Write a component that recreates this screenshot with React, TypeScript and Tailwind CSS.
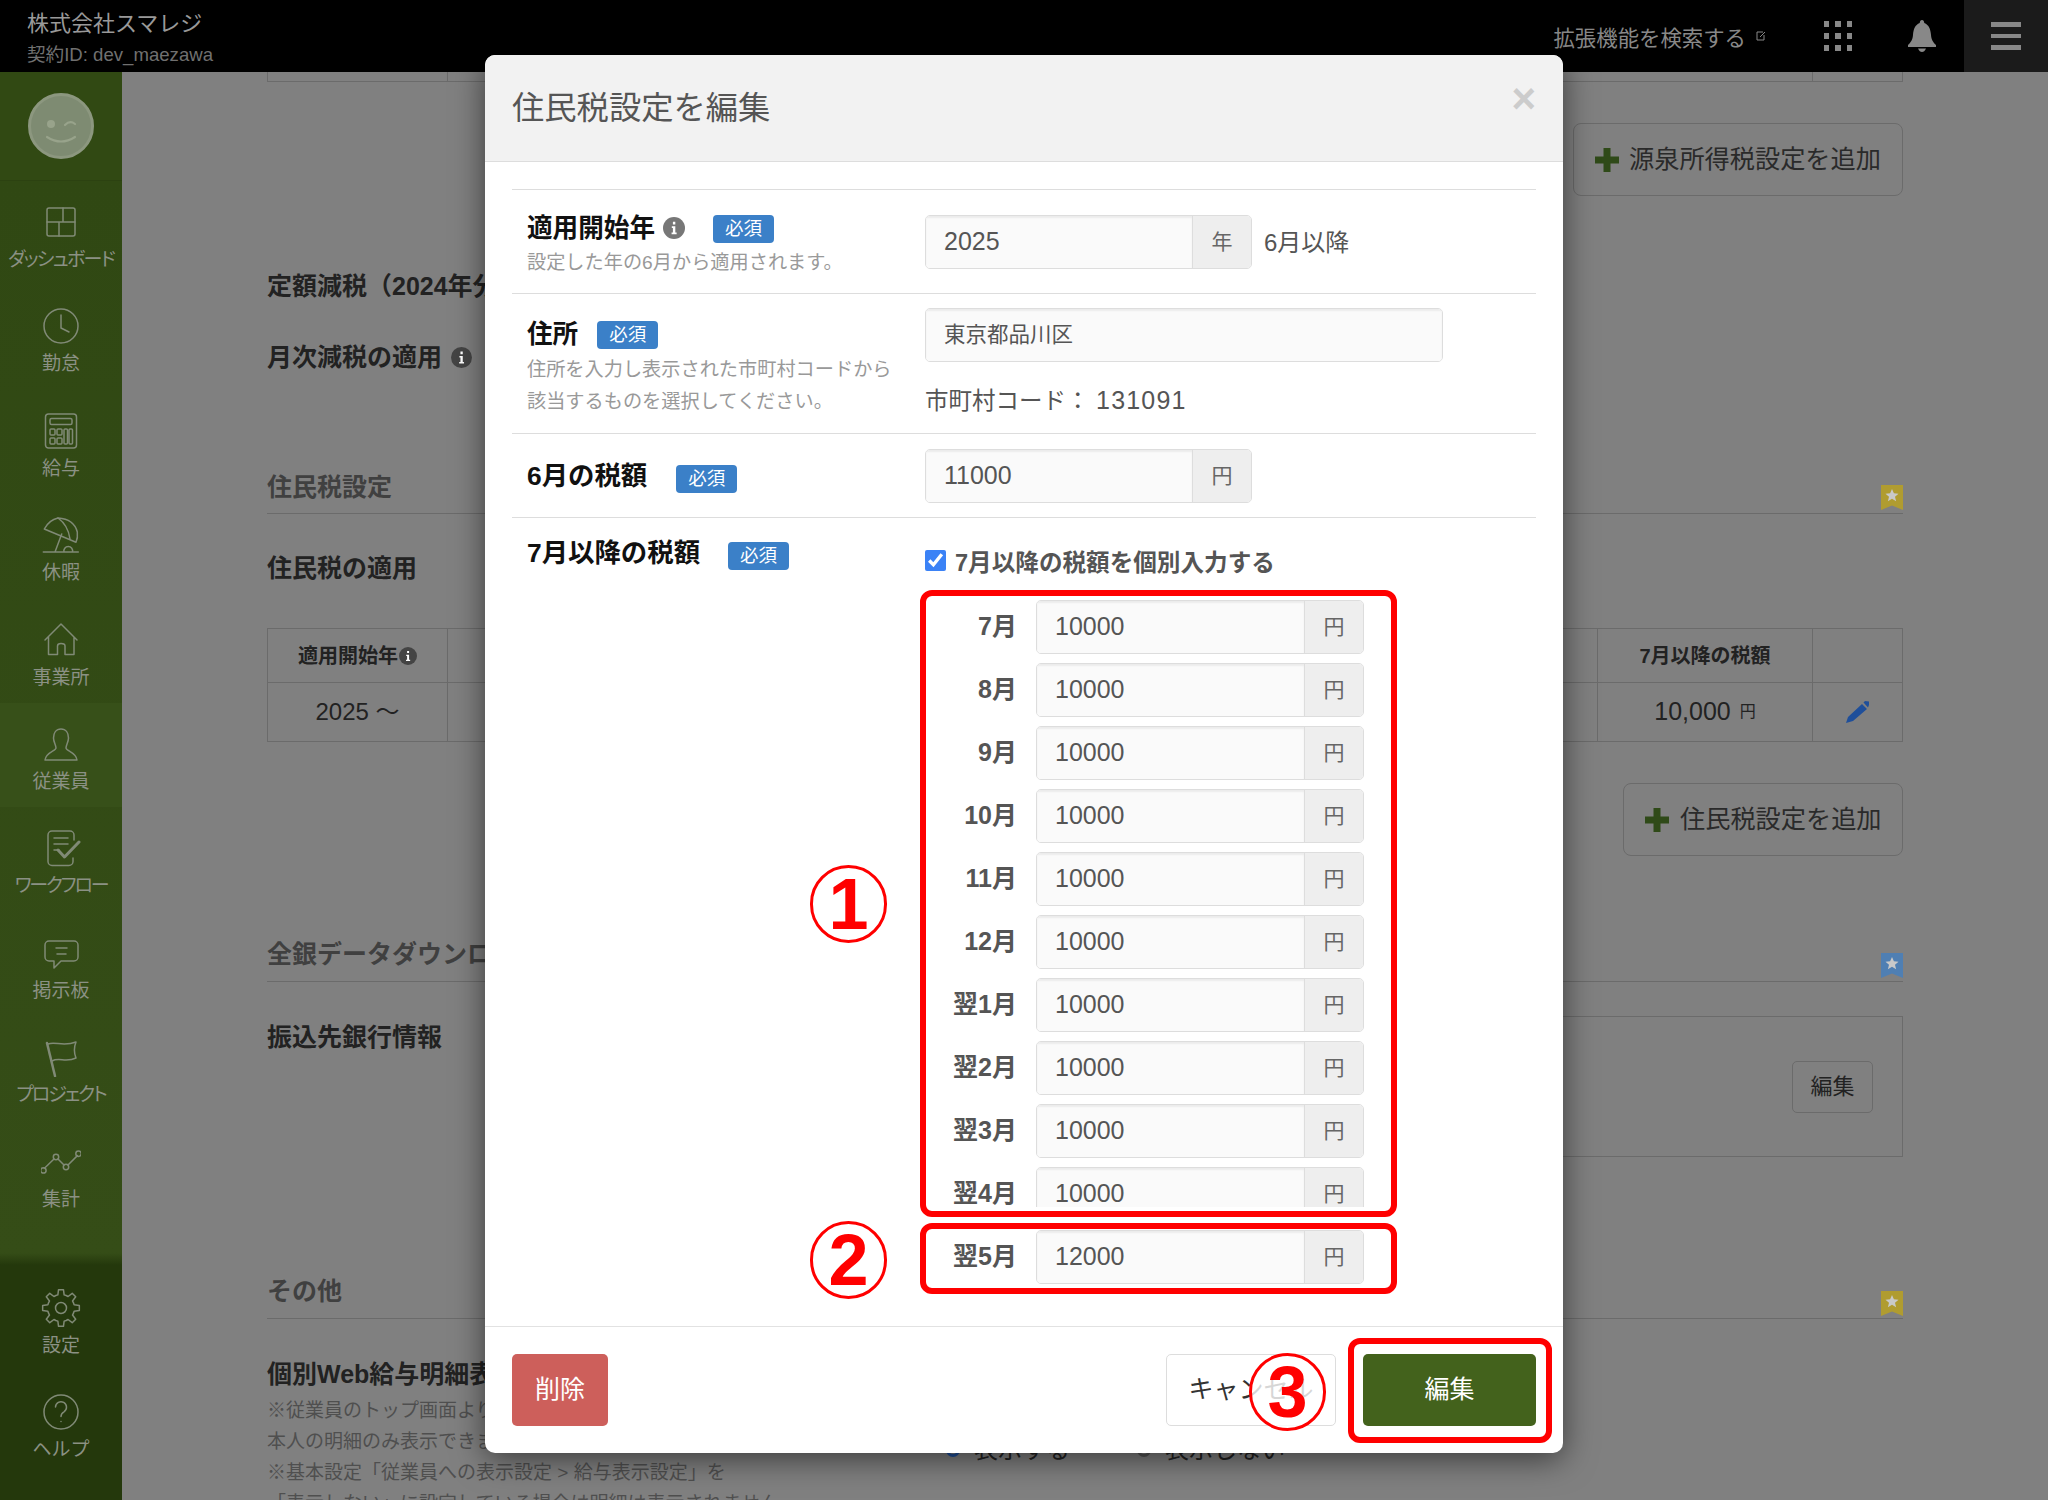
import React from "react";

const gearPath = (() => {
  const teeth = 8, cx = 20, cy = 20, ro = 18.5, ri = 13.5;
  let d = "";
  for (let i = 0; i < teeth; i++) {
    const a = (i / teeth) * Math.PI * 2 - Math.PI / 2;
    const s = (Math.PI * 2) / teeth;
    const pts: [number, number][] = [
      [ri, a - s * 0.5],
      [ri, a - s * 0.3],
      [ro, a - s * 0.17],
      [ro, a + s * 0.17],
      [ri, a + s * 0.3],
    ];
    pts.forEach(([r, t], j) => {
      const x = (cx + r * Math.cos(t)).toFixed(2);
      const y = (cy + r * Math.sin(t)).toFixed(2);
      d += `${i === 0 && j === 0 ? "M" : "L"}${x} ${y} `;
    });
  }
  return d + "Z";
})();

const Svg = ({ children }: { children: React.ReactNode }) => (
  <svg width="40" height="40" viewBox="0 0 40 40" fill="none" stroke="currentColor" strokeWidth="1.5" strokeLinecap="round" strokeLinejoin="round">
    {children}
  </svg>
);

const icons: Record<string, React.ReactNode> = {
  dash: (
    <Svg>
      <rect x="6" y="6" width="28" height="28" rx="2" />
      <path d="M6 20H34M22 6V20M18 20V34" />
    </Svg>
  ),
  clock: (
    <Svg>
      <circle cx="20" cy="20" r="17" />
      <path d="M20 9V22L28 26" />
    </Svg>
  ),
  calc: (
    <Svg>
      <rect x="4.5" y="3" width="31" height="34" rx="3" />
      <rect x="9" y="7.5" width="22" height="6" rx="1.5" />
      <rect x="9" y="18" width="5" height="6" rx="1" />
      <rect x="16" y="18" width="5" height="6" rx="1" />
      <rect x="9" y="27" width="5" height="6" rx="1" />
      <rect x="16" y="27" width="5" height="6" rx="1" />
      <rect x="23" y="18" width="3.5" height="15" rx="1" />
      <rect x="28" y="18" width="3.5" height="15" rx="1" />
    </Svg>
  ),
  beach: (
    <Svg>
      <path d="M3.3 14Q8 5 17 3Q33 4 36.3 17Q37 23 35 27.3Z" />
      <path d="M17 3Q27 10 29 24M20.7 19L14 37M2.3 37H37.3M23 37A4.4 4.4 0 1 1 31.5 37" />
    </Svg>
  ),
  home: (
    <Svg>
      <path d="M4 20L20 4L36 20M7.5 17V34.5H16.5V26Q16.5 23.5 20 23.5Q24 23.5 24 26V34.5H33V17" />
    </Svg>
  ),
  user: (
    <Svg>
      <path d="M20 5C15 5 12.5 9 12.5 14C12.5 18 15 21 15 24C15 27 5 28 4 36H36C35 28 25 27 25 24C25 21 27.5 18 27.5 14C27.5 9 25 5 20 5Z" />
    </Svg>
  ),
  flow: (
    <Svg>
      <path d="M33 12V7A4 4 0 0 0 29 3H11A4 4 0 0 0 7 7V33.5A4 4 0 0 0 11 37.5H28A4 4 0 0 0 32 33.5V30" />
      <path d="M13 10H27M13 16H27M13 22H18" />
      <path d="M17 22L23.5 29L38 14" strokeWidth="3" />
    </Svg>
  ),
  chat: (
    <Svg>
      <path d="M8 8H33A4 4 0 0 1 37 12V24A4 4 0 0 1 33 28H20L13 35V28H8A4 4 0 0 1 4 24V12A4 4 0 0 1 8 8Z" />
      <path d="M15 15H26M16 21H25" />
    </Svg>
  ),
  flag: (
    <Svg>
      <path d="M6 6L14 39" strokeWidth="2.5" />
      <path d="M7 7C14 4 22 10 35 5C33 10 33 16 35 21C25 26 18 20 11 24" />
    </Svg>
  ),
  chart: (
    <Svg>
      <path d="M3.2 26.5L13 17M17 17L23 23M27 23L36.4 13.6" />
      <circle cx="2.4" cy="28.4" r="2.7" />
      <circle cx="15" cy="15" r="2.7" />
      <circle cx="25" cy="25" r="2.7" />
      <circle cx="37.5" cy="11.7" r="2.7" />
    </Svg>
  ),
  gear: (
    <Svg>
      <path d={gearPath} />
      <circle cx="20" cy="20" r="5.5" />
    </Svg>
  ),
  help: (
    <Svg>
      <circle cx="20" cy="20" r="17" />
      <path d="M14.5 15A5.5 5.5 0 1 1 23 19.8C21 21 20 22 20 24.5M20 29.5V29.6" />
    </Svg>
  ),
};

const SideItem = ({ icon, label, active, cls }: { icon: string; label: string; active?: boolean; cls?: string }) => (
  <div className={`flex h-[104.4px] shrink-0 flex-col items-center pt-[21px] ${active ? "bg-[#375019]" : ""}`}>
    <div className="h-[40px] w-[40px] text-[#808a76]">{icons[icon]}</div>
    <div className={`mt-[1px] h-[34px] whitespace-nowrap text-[19px] leading-[34px] text-[#8b9184] ${cls ?? ""}`}>{label}</div>
  </div>
);

const Info = ({ size, color }: { size: number; color: string }) => (
  <svg width={size} height={size} viewBox="0 0 20 20" className="shrink-0">
    <circle cx="10" cy="10" r="10" fill={color} />
    <path d="M8 8.5H11.2V14.2H12.4V15.6H7.8V14.2H9V9.9H8ZM9 4.4H11.2V6.8H9Z" fill="#fff" />
  </svg>
);

const Bookmark = ({ color, cls }: { color: string; cls: string }) => (
  <svg width="22" height="25" viewBox="0 0 22 25" className={cls}>
    <path d="M0 0H22V25L11 20.5L0 25Z" fill={color} />
    <path d="M11 4L12.9 8.3L17.5 8.7L14 11.7L15.1 16.2L11 13.8L6.9 16.2L8 11.7L4.5 8.7L9.1 8.3Z" fill="#c9c9c9" />
  </svg>
);

const Plus = () => (
  <svg width="24" height="24" viewBox="0 0 24 24" className="shrink-0">
    <path d="M8.5 0H15.5V8.5H24V15.5H15.5V24H8.5V15.5H0V8.5H8.5Z" fill="#2f4a18" />
  </svg>
);

const Section = ({ title, mt, pb, mark, markCls }: { title: string; mt: string; pb: string; mark: string; markCls: string }) => (
  <div className={`flex items-end justify-between border-b border-[#6b6b6b] ${mt} ${pb}`}>
    <div className="text-[25px] font-bold leading-[34px] text-[#404040]">{title}</div>
    <Bookmark color={mark} cls={markCls} />
  </div>
);

const Main = () => (
  <div className="h-[1428px] min-w-0 flex-1 overflow-hidden bg-[#808080] px-[145px] text-[#222]">
    <div className="grid h-[10px] grid-cols-[180px_1fr_89px] border-x border-b border-[#6b6b6b]">
      <div className="border-r border-[#6b6b6b]" />
      <div className="border-r border-[#6b6b6b]" />
      <div />
    </div>
    <div className="mt-[41px] flex justify-end">
      <div className="flex h-[73px] w-[330px] items-center gap-[10px] rounded-[8px] border border-[#6b6b6b] pl-[21px] text-[25.2px] text-[#2a2a2a]">
        <Plus />
        <span>源泉所得税設定を追加</span>
      </div>
    </div>
    <div className="mt-[73px] text-[25px] font-bold leading-[34px]">定額減税（2024年分）</div>
    <div className="mt-[37px] flex items-center gap-[9px] text-[25px] font-bold leading-[34px]">
      月次減税の適用
      <Info size={21} color="#444" />
    </div>
    <Section title="住民税設定" mt="mt-[96px]" pb="pb-[9px]" mark="#b09c30" markCls="mb-[-6px]" />
    <div className="mt-[37px] text-[25px] font-bold leading-[34px]">住民税の適用</div>
    <div className="mt-[43px] grid grid-cols-[180px_1fr_215px_89px] border border-[#6b6b6b] text-center">
      <div className="flex h-[54px] items-center justify-center gap-[1px] border-r border-b border-[#6b6b6b] text-[20px] font-bold">
        適用開始年
        <Info size={18} color="#444" />
      </div>
      <div className="border-r border-b border-[#6b6b6b]" />
      <div className="flex items-center justify-center border-r border-b border-[#6b6b6b] text-[20px] font-bold">7月以降の税額</div>
      <div className="border-b border-[#6b6b6b]" />
      <div className="flex h-[58px] items-center justify-center border-r border-[#6b6b6b] text-[24px]">2025 〜</div>
      <div className="border-r border-[#6b6b6b]" />
      <div className="flex items-center justify-center gap-[9px] border-r border-[#6b6b6b] text-[25px]">
        10,000 <span className="text-[16px]">円</span>
      </div>
      <div className="flex items-center justify-center">
        <svg width="23" height="22" viewBox="0 0 23 22">
          <path d="M0 22L2 16L16 3L21 8L7 20ZM17.5 1.5L19 0L23 0.5L23 4L22 6.5Z" fill="#1f4f9a" />
        </svg>
      </div>
    </div>
    <div className="mt-[41px] flex justify-end">
      <div className="flex h-[73px] w-[280px] items-center gap-[11px] rounded-[8px] border border-[#6b6b6b] pl-[21px] text-[25.2px] text-[#2a2a2a]">
        <Plus />
        <span>住民税設定を追加</span>
      </div>
    </div>
    <Section title="全銀データダウンロード" mt="mt-[81px]" pb="pb-[10px]" mark="#4f7fb3" markCls="mb-[-7px]" />
    <div className="mt-[34px] flex">
      <div className="w-[320px] shrink-0 pt-[4px] text-[25px] font-bold leading-[34px]">振込先銀行情報</div>
      <div className="flex h-[141px] flex-1 items-center justify-end border border-[#6b6b6b] pr-[29px]">
        <div className="flex h-[52px] w-[81px] items-center justify-center rounded-[5px] border border-[#6b6b6b] text-[22px]">編集</div>
      </div>
    </div>
    <Section title="その他" mt="mt-[117px]" pb="pb-[10px]" mark="#b09c30" markCls="mb-[-8px]" />
    <div className="mt-[38px] flex">
      <div className="w-[660px] shrink-0">
        <div className="whitespace-nowrap text-[25px] font-bold leading-[34px]">個別Web給与明細表示</div>
        <div className="mt-[4px] w-[500px] text-[19px] leading-[31px] whitespace-nowrap text-[#4f4f4f]">
          <div>※従業員のトップ画面より個別Web給与明細を</div>
          <div>本人の明細のみ表示できます。</div>
          <div>※基本設定「従業員への表示設定 &gt; 給与表示設定」を</div>
          <div>「表示しない」に設定している場合は明細は表示されません。</div>
        </div>
      </div>
      <div className="ml-[19px] mt-[76px] flex items-center self-start text-[24px] leading-[34px]">
        <span className="mr-[14px] h-[14px] w-[14px] rounded-full border-[3px] border-[#1f4f9a]" />
        <span>表示する</span>
        <span className="ml-[67px] mr-[14px] h-[14px] w-[14px] rounded-full border-[3px] border-[#555]" />
        <span>表示しない</span>
      </div>
    </div>
  </div>
);

const Sidebar = () => (
  <div className="flex h-[1428px] w-[122px] shrink-0 flex-col bg-[#314913]">
    <div className="flex h-[109px] shrink-0 items-center justify-center border-b border-[#2c4211]">
      <svg width="66" height="66" viewBox="0 0 66 66">
        <circle cx="33" cy="33" r="31.5" fill="#7e8b72" stroke="#8c977f" strokeWidth="3" />
        <circle cx="23" cy="31" r="4" fill="#98a38b" />
        <path d="M37 32Q42 27 47 31M19 44Q33 53 47 44" fill="none" stroke="#98a38b" strokeWidth="2.2" strokeLinecap="round" />
      </svg>
    </div>
    <div className="relative flex h-[1084px] shrink-0 flex-col overflow-hidden bg-linear-to-b from-[#304813] to-[#354d17]">
      <SideItem icon="dash" label="ダッシュボード" cls="tracking-[-1.7px] [font-feature-settings:'palt']" />
      <SideItem icon="clock" label="勤怠" />
      <SideItem icon="calc" label="給与" />
      <SideItem icon="beach" label="休暇" />
      <SideItem icon="home" label="事業所" />
      <SideItem icon="user" label="従業員" active />
      <SideItem icon="flow" label="ワークフロー" cls="tracking-[-2.2px] [font-feature-settings:'palt']" />
      <SideItem icon="chat" label="掲示板" />
      <SideItem icon="flag" label="プロジェクト" cls="tracking-[-2.1px] [font-feature-settings:'palt']" />
      <SideItem icon="chart" label="集計" />
      <div className="absolute right-0 bottom-0 left-0 h-[12px] bg-linear-to-b from-transparent to-[#24380c]" />
    </div>
    <div className="flex-1 bg-[#24380c] pt-[2px]">
      <SideItem icon="gear" label="設定" />
      <SideItem icon="help" label="ヘルプ" />
    </div>
  </div>
);

const TopBar = () => (
  <div className="flex h-[72px] items-stretch bg-black">
    <div className="flex-1 pl-[27px]">
      <div className="mt-[8px] text-[22px] leading-[32px] text-[#999]">株式会社スマレジ</div>
      <div className="mt-[1px] text-[18.6px] leading-[27px] text-[#707070]">契約ID: dev_maezawa</div>
    </div>
    <div className="flex items-center">
      <span className="mt-[6px] text-[21.4px] text-[#888]">拡張機能を検索する</span>
      <svg width="10" height="10" viewBox="0 0 10 10" className="ml-[10px]" fill="none" stroke="#888" strokeWidth="1">
        <path d="M7 1H1V9H8V4M4 6L9 1" />
      </svg>
      <div className="ml-[58px] grid w-[28px] grid-cols-3 gap-x-[6px] gap-y-[6px]">
        {Array.from({ length: 9 }).map((_, i) => (
          <span key={i} className="h-[6px] w-[5.3px] bg-[#888]" />
        ))}
      </div>
      <svg width="30" height="32" viewBox="0 0 30 32" className="ml-[55px]">
        <path d="M15 0C16.5 0 17 1 17.3 3C22 5 23.5 9 24 15C24.4 20 26 22 29 25V27H1V25C4 22 5.6 20 6 15C6.5 9 8 5 12.7 3C13 1 13.5 0 15 0ZM11 28.5H19C18 31 16.5 32 15 32C13.5 32 12 31 11 28.5Z" fill="#888" />
      </svg>
      <div className="ml-[27px] flex h-[72px] w-[84px] flex-col items-center justify-center gap-[7px] bg-[#1b1b1b]">
        <span className="h-[4.5px] w-[30px] bg-[#888]" />
        <span className="h-[4.5px] w-[30px] bg-[#888]" />
        <span className="h-[4.5px] w-[30px] bg-[#888]" />
      </div>
    </div>
  </div>
);

const Badge = ({ cls }: { cls: string }) => (
  <span className={`flex h-[28px] w-[61px] shrink-0 items-center justify-center rounded-[4px] bg-[#3b80c8] text-[18.5px] font-normal text-white ${cls}`}>必須</span>
);

const Field = ({ value, unit, wide, inputCls }: { value: string; unit?: string; wide?: boolean; inputCls?: string }) => (
  <div className={`flex h-[54px] overflow-hidden rounded-[5px] border border-[#ddd] ${inputCls ?? ""}`}>
    <div className={`flex flex-1 items-center bg-[#fafafa] pl-[18px] text-[#555] shadow-[inset_0_2px_2px_rgba(0,0,0,0.06)] ${wide ? "pt-[1px] text-[21.5px]" : "text-[25px]"}`}>{value}</div>
    {unit && <div className="flex w-[59px] shrink-0 items-center justify-center border-l border-[#ddd] bg-[#eee] text-[21px] text-[#666]">{unit}</div>}
  </div>
);

const Label = ({ children, cls }: { children: React.ReactNode; cls?: string }) => <div className={`flex h-[34px] items-center font-bold text-[#111] ${cls ?? "text-[26px]"}`}>{children}</div>;

const Help = ({ children }: { children: React.ReactNode }) => <div className="whitespace-nowrap text-[19.2px] leading-[32px] text-[#999]">{children}</div>;

const months: [string, string][] = [
  ["7月", "10000"],
  ["8月", "10000"],
  ["9月", "10000"],
  ["10月", "10000"],
  ["11月", "10000"],
  ["12月", "10000"],
  ["翌1月", "10000"],
  ["翌2月", "10000"],
  ["翌3月", "10000"],
  ["翌4月", "10000"],
  ["翌5月", "12000"],
];

const Modal = () => (
  <div className="absolute top-[55px] left-[485px] flex h-[1398px] w-[1078px] flex-col overflow-hidden rounded-[10px] bg-white shadow-[0_6px_32px_rgba(0,0,0,0.55)]">
    <div className="flex h-[107px] shrink-0 items-center justify-between border-b border-[#ddd] bg-[#f2f2f2] pr-[27px] pl-[27px]">
      <div className="pt-[1px] text-[32.3px] text-[#555]">住民税設定を編集</div>
      <div className="mt-[-18px] text-[42px] font-bold leading-none text-[#ccc]">×</div>
    </div>
    <div className="flex-1 overflow-hidden px-[27px] pt-[27px]">
      <div className="flex h-[104px] border-t border-[#ddd]">
        <div className="w-[413px] shrink-0 pt-[21px] pl-[15px]">
          <Label cls="text-[25.6px]">
            適用開始年
            <span className="ml-[8px]"><Info size={22} color="#777" /></span>
            <Badge cls="ml-[28px] mt-[2px]" />
          </Label>
          <div className="mt-[2px]"><Help>設定した年の6月から適用されます。</Help></div>
        </div>
        <div className="flex items-start pt-[25px]">
          <Field value="2025" unit="年" inputCls="w-[327px]" />
          <span className="ml-[12px] mt-[1px] text-[24px] leading-[54px] text-[#555]">6月以降</span>
        </div>
      </div>
      <div className="flex h-[140px] border-t border-[#ddd]">
        <div className="w-[413px] shrink-0 pt-[23px] pl-[15px]">
          <Label cls="text-[25.6px]">
            住所
            <Badge cls="ml-[19px] mt-[2px]" />
          </Label>
          <div className="mt-[3px]">
            <Help>住所を入力し表示された市町村コードから</Help>
            <Help>該当するものを選択してください。</Help>
          </div>
        </div>
        <div className="w-[518px] pt-[14px]">
          <Field value="東京都品川区" wide />
          <div className="mt-[22px] text-[23.5px] leading-[32px] text-[#555]">
            市町村コード： <span className="text-[25px] tracking-[1.2px]">131091</span>
          </div>
        </div>
      </div>
      <div className="flex h-[84px] border-t border-[#ddd]">
        <div className="w-[413px] shrink-0 pt-[26px] pl-[15px]">
          <Label cls="text-[26.4px]">
            6月の税額
            <Badge cls="ml-[29px] mt-[3px]" />
          </Label>
        </div>
        <div className="pt-[15px]"><Field value="11000" unit="円" inputCls="w-[327px]" /></div>
      </div>
      <div className="flex border-t border-[#ddd]">
        <div className="w-[413px] shrink-0 pt-[19px] pl-[15px]">
          <Label cls="text-[26.4px]">
            7月以降の税額
            <Badge cls="ml-[28px] mt-[3px]" />
          </Label>
        </div>
        <div className="flex-1 pt-[31px]">
          <label className="flex h-[24px] items-center gap-[9px] text-[23.6px] font-bold whitespace-nowrap text-[#555]">
            <input type="checkbox" defaultChecked readOnly className="m-0 mt-[-1px] h-[21px] w-[21px] accent-[#3b82f6]" />
            <span className="mt-[5px]">7月以降の税額を個別入力する</span>
          </label>
          <div className="mt-[27px] flex flex-col gap-[9px]">
            {months.map(([m, v]) => (
              <div key={m} className="flex items-center">
                <div className="w-[92px] shrink-0 text-right text-[25px] font-bold whitespace-nowrap text-[#555]">{m}</div>
                <div className="ml-[19px] w-[328px]"><Field value={v} unit="円" /></div>
              </div>
            ))}
          </div>
        </div>
      </div>
    </div>
    <div className="flex h-[127px] shrink-0 items-start justify-between border-t border-[#e2e2e2] px-[27px] pt-[27px] text-[25px]">
      <div className="flex h-[72px] w-[96px] items-center justify-center rounded-[5px] bg-[#cd5f5b] text-white">削除</div>
      <div className="flex gap-[27px]">
        <div className="flex h-[72px] w-[170px] items-center justify-center rounded-[5px] border border-[#ddd] bg-white text-[#333]">キャンセル</div>
        <div className="flex h-[72px] w-[173px] items-center justify-center rounded-[5px] bg-[#43621c] text-white">編集</div>
      </div>
    </div>
  </div>
);

const Circled = ({ n, cls, halo }: { n: string; cls: string; halo?: boolean }) => (
  <div className={`absolute flex h-[78px] w-[77px] items-center justify-center rounded-full border-[3px] border-[#f00] text-[72px] leading-none font-bold text-[#f00] ${halo ? "bg-white/80" : ""} ${cls}`}>{n}</div>
);

export default function App() {
  return (
    <div className="relative h-[1500px] w-[2048px] overflow-hidden [font-family:'Liberation_Sans','Noto_Sans_CJK_JP',sans-serif]">
      <TopBar />
      <div className="flex">
        <Sidebar />
        <Main />
      </div>
      <Modal />
      <div className="absolute top-[1207px] left-[926px] h-[16px] w-[465px] bg-white" />
      <div className="absolute top-[590px] left-[920px] h-[627px] w-[477px] rounded-[12px] border-[6px] border-[#f00]" />
      <div className="absolute top-[1223px] left-[920px] h-[71px] w-[477px] rounded-[12px] border-[6px] border-[#f00]" />
      <div className="absolute top-[1338px] left-[1348px] h-[105px] w-[204px] rounded-[12px] border-[6px] border-[#f00]" />
      <Circled n="1" cls="top-[865px] left-[810px]" />
      <Circled n="2" cls="top-[1221px] left-[810px]" />
      <Circled n="3" cls="top-[1353px] left-[1249px]" halo />
    </div>
  );
}
